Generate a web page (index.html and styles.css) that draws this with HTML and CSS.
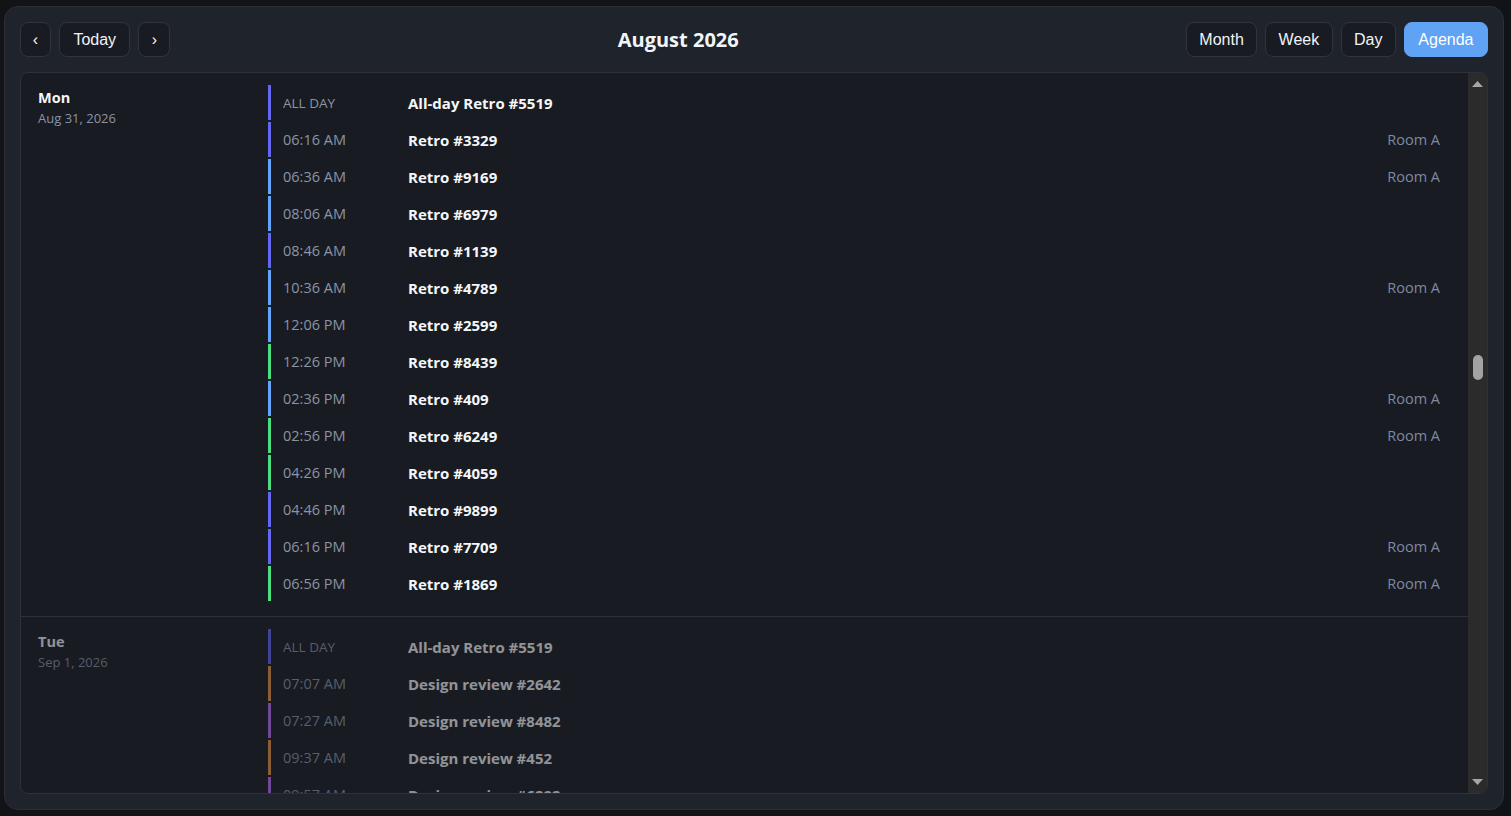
FILE: index.html
```html
<!DOCTYPE html>
<html lang="en">
<head>
<meta charset="utf-8">
<title>Agenda</title>
<link rel="stylesheet" href="styles.css">
</head>
<body>
<div class="panel">
  <header class="toolbar">
    <div class="group">
      <button class="btn btn-icon btn-prev">&lsaquo;</button>
      <button class="btn btn-today">Today</button>
      <button class="btn btn-icon">&rsaquo;</button>
    </div>
    <h1 class="title">August 2026</h1>
    <div class="group">
      <button class="btn">Month</button>
      <button class="btn">Week</button>
      <button class="btn">Day</button>
      <button class="btn btn-active">Agenda</button>
    </div>
  </header>
  <div class="agenda">
    <div class="agenda-body">
      <section class="day">
        <div class="day-label">
          <div class="day-name">Mon</div>
          <div class="day-date">Aug 31, 2026</div>
        </div>
        <div class="events">
          <div class="event c-indigo"><span class="time allday">ALL DAY</span><span class="name">All-day Retro #5519</span><span class="room"></span></div>
          <div class="event c-indigo"><span class="time">06:16 AM</span><span class="name">Retro #3329</span><span class="room">Room A</span></div>
          <div class="event c-blue"><span class="time">06:36 AM</span><span class="name">Retro #9169</span><span class="room">Room A</span></div>
          <div class="event c-blue"><span class="time">08:06 AM</span><span class="name">Retro #6979</span><span class="room"></span></div>
          <div class="event c-indigo"><span class="time">08:46 AM</span><span class="name">Retro #1139</span><span class="room"></span></div>
          <div class="event c-blue"><span class="time">10:36 AM</span><span class="name">Retro #4789</span><span class="room">Room A</span></div>
          <div class="event c-blue"><span class="time">12:06 PM</span><span class="name">Retro #2599</span><span class="room"></span></div>
          <div class="event c-green"><span class="time">12:26 PM</span><span class="name">Retro #8439</span><span class="room"></span></div>
          <div class="event c-blue"><span class="time">02:36 PM</span><span class="name">Retro #409</span><span class="room">Room A</span></div>
          <div class="event c-green"><span class="time">02:56 PM</span><span class="name">Retro #6249</span><span class="room">Room A</span></div>
          <div class="event c-green"><span class="time">04:26 PM</span><span class="name">Retro #4059</span><span class="room"></span></div>
          <div class="event c-indigo"><span class="time">04:46 PM</span><span class="name">Retro #9899</span><span class="room"></span></div>
          <div class="event c-indigo"><span class="time">06:16 PM</span><span class="name">Retro #7709</span><span class="room">Room A</span></div>
          <div class="event c-green"><span class="time">06:56 PM</span><span class="name">Retro #1869</span><span class="room">Room A</span></div>
        </div>
      </section>
      <section class="day dim">
        <div class="day-label">
          <div class="day-name">Tue</div>
          <div class="day-date">Sep 1, 2026</div>
        </div>
        <div class="events">
          <div class="event c-indigo"><span class="time allday">ALL DAY</span><span class="name">All-day Retro #5519</span><span class="room"></span></div>
          <div class="event c-orange"><span class="time">07:07 AM</span><span class="name">Design review #2642</span><span class="room"></span></div>
          <div class="event c-purple"><span class="time">07:27 AM</span><span class="name">Design review #8482</span><span class="room"></span></div>
          <div class="event c-orange"><span class="time">09:37 AM</span><span class="name">Design review #452</span><span class="room"></span></div>
          <div class="event c-purple"><span class="time">09:57 AM</span><span class="name">Design review #6292</span><span class="room"></span></div>
        </div>
      </section>
    </div>
    <div class="scrollbar" aria-hidden="true">
      <svg class="arrow" width="19" height="18" viewBox="0 0 19 18"><polygon points="4,14 9.5,8 15,14" fill="#a6a6a6"/></svg>
      <div class="track"><div class="thumb"></div></div>
      <svg class="arrow" width="19" height="18" viewBox="0 0 19 18"><polygon points="4,4 15,4 9.5,10" fill="#a6a6a6"/></svg>
    </div>
  </div>
</div>
</body>
</html>
```

FILE: styles.css
```css
* { box-sizing: border-box; }
html, body { height: 100%; }
body {
  margin: 0;
  padding: 6px 7px 6px 4px;
  background: #111317;
  font-family: "Open Sans", "Noto Sans", sans-serif;
  color: #f3f4f6;
  overflow: hidden;
}
.panel {
  height: 804px;
  display: flex;
  flex-direction: column;
  gap: 15px;
  padding: 15px;
  background: #1f232b;
  border: 1px solid #2b3039;
  border-radius: 14px;
}
.toolbar {
  display: flex;
  align-items: center;
  justify-content: space-between;
}
.group { display: flex; gap: 8px; }
.btn {
  height: 35px;
  padding: 0 12.4px;
  border: 1px solid #2f343e;
  border-radius: 8px;
  background: #181b22;
  color: #f1f3f6;
  font-family: "Liberation Sans", Arial, sans-serif;
  font-size: 16px;
  cursor: pointer;
}
.btn-icon { width: 32px; padding: 0; }
.btn-prev { width: 31px; }
.btn-today { padding: 0 13.4px; }
.btn-active {
  padding: 0 13.5px;
  background: #60a3f5;
  border-color: #60a3f5;
  color: #ffffff;
}
.title {
  margin: 0;
  font-size: 20px;
  font-weight: 700;
  color: #f3f5f8;
}
.agenda {
  flex: 1;
  min-height: 0;
  display: flex;
  overflow: hidden;
  background: #181b22;
  border: 1px solid #2c313a;
  border-radius: 8px;
}
.agenda-body {
  flex: 1;
  min-width: 0;
  overflow: hidden;
}
.scrollbar {
  width: 19px;
  flex: none;
  display: flex;
  flex-direction: column;
  background: #2b2b2b;
}
.arrow { display: block; flex: none; }
.track { flex: 1; }
.thumb {
  width: 10px;
  height: 25px;
  margin: 264px auto 0;
  border-radius: 5px;
  background: #a3a3a3;
}
.day {
  display: flex;
  padding: 12px 28px 15px 17px;
  border-bottom: 1px solid #2c313a;
}
.day.dim { opacity: 0.55; }
.day-label {
  width: 230px;
  flex: none;
  padding-top: 5px;
}
.day-name {
  font-size: 14.5px;
  font-weight: 700;
  line-height: 16px;
  color: #f5f6f8;
}
.day-date {
  margin-top: 3px;
  font-size: 13px;
  line-height: 18px;
  color: #8a93a4;
}
.events {
  flex: 1;
  display: flex;
  flex-direction: column;
  gap: 2px;
}
.event {
  height: 35px;
  display: grid;
  grid-template-columns: 125px 1fr auto;
  align-items: center;
  padding-left: 12px;
  border-left: 3px solid #6366f1;
}
.c-indigo { border-left-color: #6366f1; }
.c-blue { border-left-color: #60a5fa; }
.c-green { border-left-color: #4ade80; }
.c-orange { border-left-color: #e99546; }
.c-purple { border-left-color: #b670fa; }
.time {
  font-size: 14.5px;
  color: #8b94a5;
}
.time.allday { font-size: 13.5px; }
.name {
  font-size: 15px;
  font-weight: 700;
  color: #f5f6f8;
}
.room {
  font-size: 14.5px;
  color: #7e8aa2;
}
```
